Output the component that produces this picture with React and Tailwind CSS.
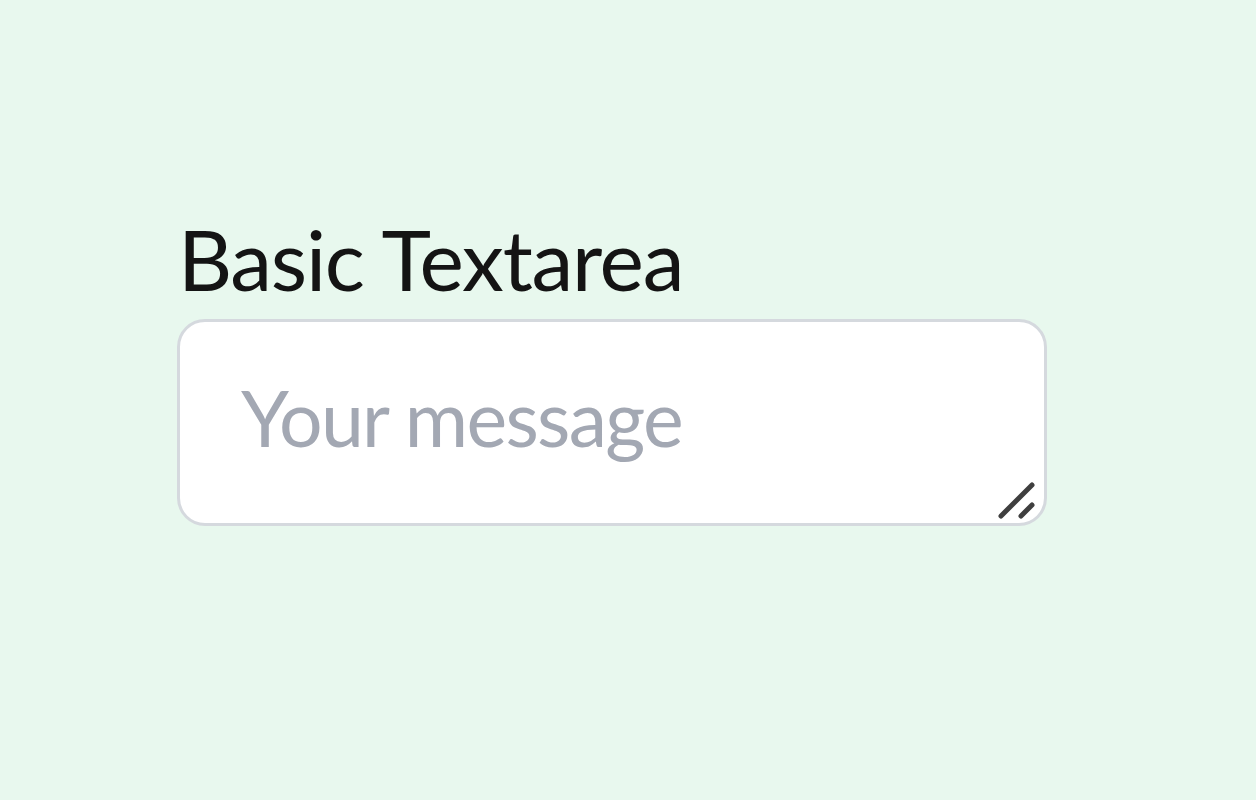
import React from "react";

export default function App() {
  return (
    <div className="w-full h-[800px] bg-[#e8f8ee] overflow-hidden" style={{ fontFamily: 'Lato, "Noto Sans", sans-serif' }}>
      <div className="pl-[177px] pt-[217px] flex flex-col items-start">
        <label htmlFor="msg" className="text-[84px] leading-none tracking-[-0.015em] text-[#141414] pl-[1px]">
          Basic Textarea
        </label>
        <div className="relative mt-[18px]">
          <textarea
            id="msg"
            placeholder="Your message"
            className="block w-[870px] h-[207px] resize-none bg-white border-[3px] border-[#d5d9de] rounded-[28px] pt-[57px] pl-[61px] pr-6 text-[77px] leading-none tracking-[-0.022em] text-gray-800 placeholder:text-[#a3a8b3] outline-none"
            style={{ fontFamily: 'Lato, "Noto Sans", sans-serif' }}
          />
          <svg className="absolute right-[10px] bottom-[6px] pointer-events-none" width="40" height="40" viewBox="0 0 40 40">
            <line x1="4" y1="36" x2="35" y2="5" stroke="#3f3f3f" strokeWidth="5" strokeLinecap="round" />
            <line x1="24" y1="36" x2="35" y2="25" stroke="#3f3f3f" strokeWidth="5" strokeLinecap="round" />
          </svg>
        </div>
      </div>
    </div>
  );
}
